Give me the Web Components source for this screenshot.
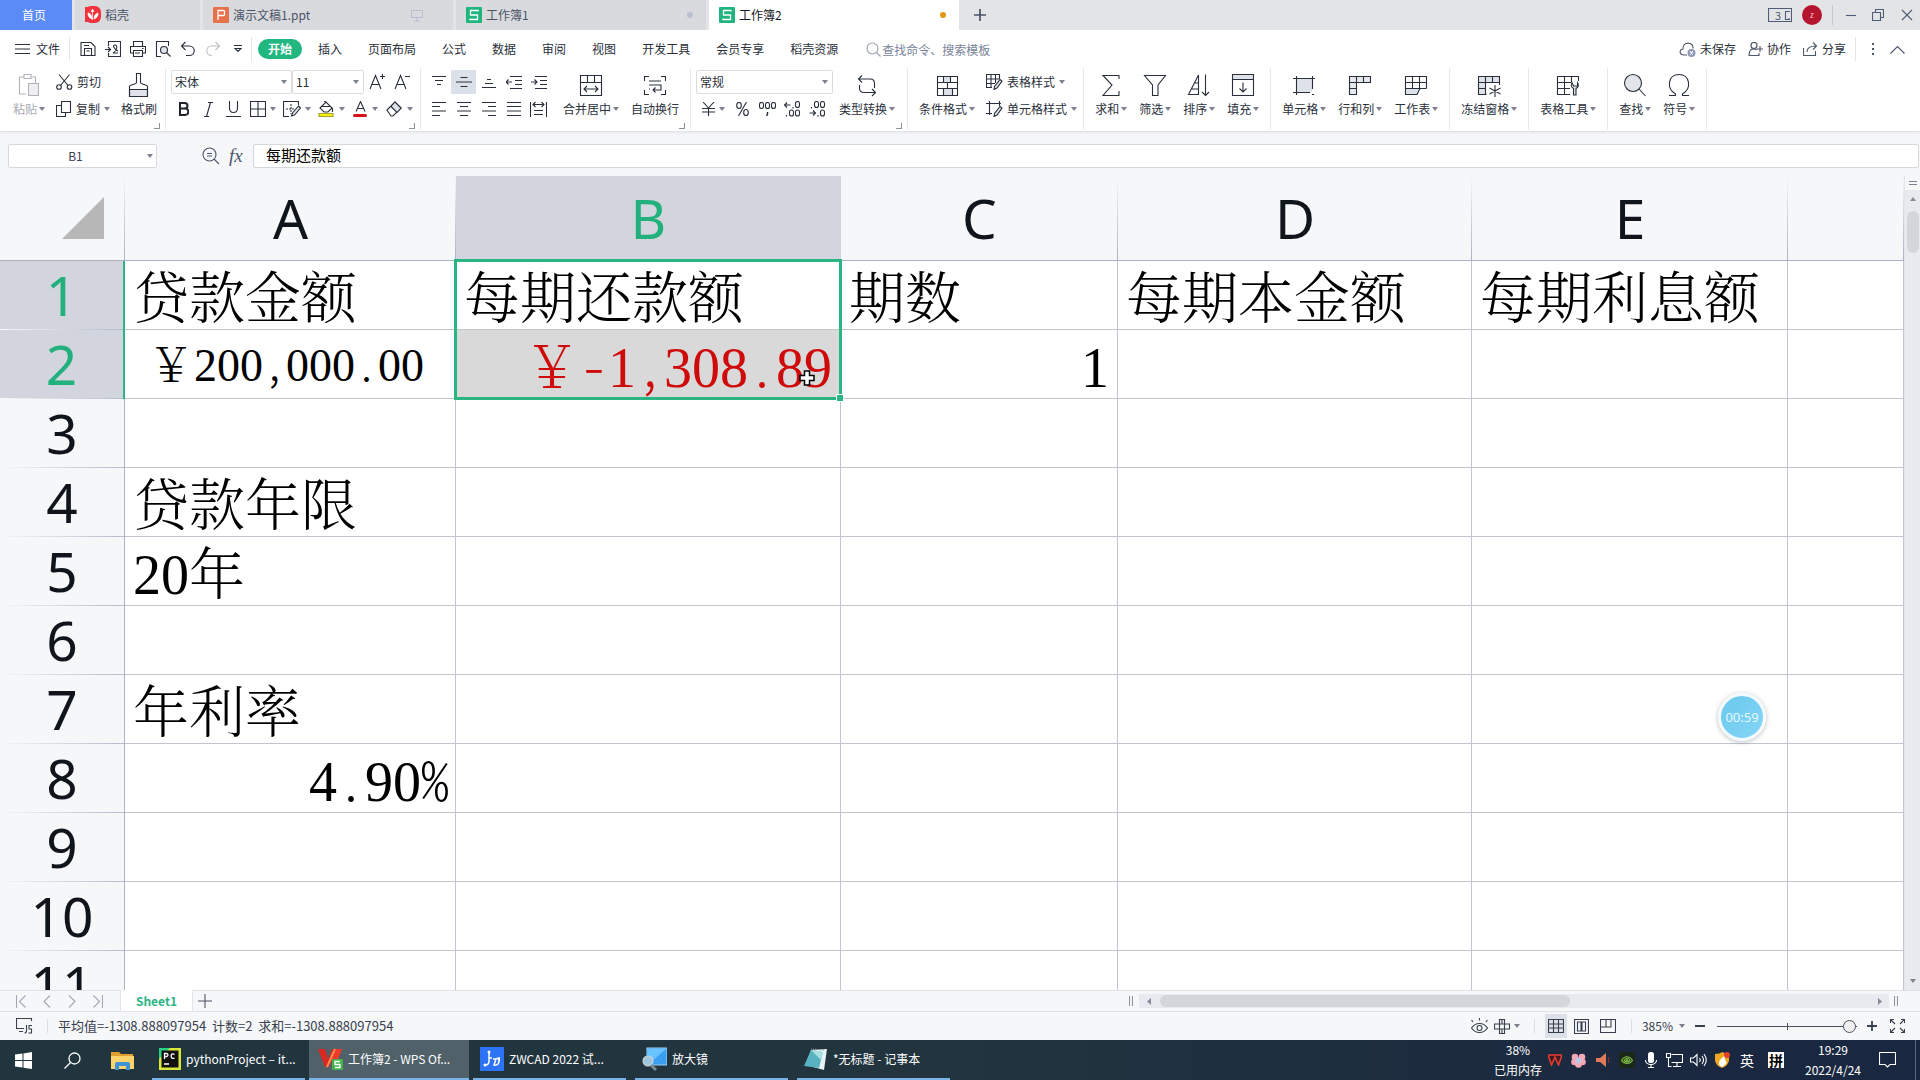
<!DOCTYPE html>
<html lang="zh-CN">
<head>
<meta charset="utf-8">
<title>工作簿2 - WPS Office</title>
<style>
  html, body { margin: 0; height: 100%; }
  body { font: 12px/16px "Noto Sans CJK SC", "Liberation Sans", sans-serif; color: #2a303b; overflow: hidden; }
</style>
</head>
<body>
<desktop-app></desktop-app>
<script>
/* Icon artwork: [width, height, svg content] */
const ICONS = {
  caret: [6, 4, '<path d="M0 0h6L3 4z" fill="#7b818d" stroke="none"/>'],
  corner: [6, 6, '<path d="M5.500 0v5.500H0" stroke="#8c919b"/>'],
  docer: [16, 18, '<rect width="16" height="17" rx="6" fill="#f2333f" stroke="none"/><path d="M0 1h9v15H0z" fill="#f2333f" stroke="none"/><path d="M7.500 14V4M7 13C4 12 3 10 3 7c2 0 4 2 4 6M9 13c3-1 4-3 4-6-3 1-4 3-4 6M6 6l1.500-3L9 6" stroke="#fff" fill="#fff" stroke-width=".7"/>'],
  ppt: [16, 16, '<rect width="16" height="16" rx="1" fill="#e8704a" stroke="none"/><path d="M5 13V3.500h5.500q1 0 1 1v3q0 1-1 1H5" stroke="#fff" stroke-width="1.300"/>'],
  xls: [16, 16, '<rect width="16" height="16" rx="1" fill="#1fb57c" stroke="none"/><path d="M12 4.500V3.500H4.500V8h7v4.500H4v-1" stroke="#fff" stroke-width="1.300"/>'],
  monitor: [12, 13, '<path d="M.5 1.500h11v7H.5zM6 8.500V12M3 12h6" stroke="#b9bfd0"/>'],
  plus: [12, 12, '<path d="M6 0v12M0 6h12" stroke="#4b5468" stroke-width="1.700"/>'],
  rooms: [24, 14, '<path d="M.5.5h23v13H.5z" stroke="#4f5b78"/><path d="M22 3.500h-4.500v8H22M20.500 10.500h1" stroke="#4f5b78"/>'],
  min: [12, 12, '<path d="M1 6.500h10" stroke="#4f5b78"/>'],
  restore: [12, 12, '<path d="M.5 3.500h8v8h-8zM3.500 3.500V.5h8v8h-3" stroke="#4f5b78"/>'],
  close: [12, 12, '<path d="M1 1l10 10M11 1L1 11" stroke="#4f5b78"/>'],
  menu: [15, 12, '<path d="M0 1.500h15M0 6h15M0 10.500h15"/>'],
  save: [16, 16, '<path d="M1 14.500V1.500h10l4 4v9zM4.500 14V7.500h7V14M4 4.500h5M6.500 10h3"/>'],
  pdf: [16, 16, '<path d="M3.500 5V.5h12v15h-12V12M0 8.500h5M3 6l2.500 2.500L3 11M8 12c4-2 5-8 2-8s-1 4 3 6M8 12h5"/>'],
  print: [16, 16, '<path d="M3.500 5V.5h9V5M3.500 12h-3V5.500h15V12h-3M3.500 9.500h9v6h-9zM5 12h5M12 7.500h1.500"/>'],
  preview: [16, 16, '<path d="M6 15.500H1.500V.5h12V5"/><circle cx="9" cy="9" r="3.500" fill="#dfe2e8"/><path d="M11.500 11.500l4 4"/>'],
  undo: [16, 16, '<path d="M5.500 1L1.500 5l4 4M1.500 5H9c7 0 7 9.500 0 9.500H6"/>'],
  redo: [16, 16, '<path d="M10.500 1l4 4-4 4M14.500 5H7c-7 0-7 9.500 0 9.500" stroke="#bcbfc5"/>'],
  more: [10, 8, '<path d="M1 .5h8M2 3.500h6L5 6.500z"/>'],
  find: [15, 15, '<circle cx="6.500" cy="6.500" r="5.500" stroke="#9aa1b2"/><path d="M10.500 10.500L14.500 14.500" stroke="#9aa1b2"/>'],
  cloud: [17, 15, '<path d="M8 13H5C0 13 0 7 4 7 3-1 15-.5 14 6.500" stroke="#4d5569"/><circle cx="12.500" cy="11" r="4" fill="#8d97b5" stroke="none"/><path d="M11 9.500l3 3M14 9.500l-3 3" stroke="#fff"/>'],
  team: [15, 14, '<circle cx="6" cy="3.500" r="3" stroke="#4d5569"/><path d="M9 7.500c-6-2-8 1-8 6h10V11M9 7h6M12 4v6" stroke="#4d5569"/>'],
  share: [15, 14, '<path d="M.5 6v7.500h12V9M4 10c0-4 3-6 9-6M10 .5L13.500 4 10 7.500" stroke="#4d5569"/>'],
  dots: [3, 13, '<path d="M0 0h2v2H0zM0 5h2v2H0zM0 10h2v2H0z" fill="#4d5569" stroke="none"/>'],
  up: [15, 9, '<path d="M.5 8.500l7-7 7 7" stroke="#4d5569"/>'],
  paste: [24, 24, '<path d="M7 4H2.500v17H9M14 4h4.500v6M7 1.500h7v4H7z" stroke="#b0b3b9"/><path d="M11.500 10.500h10v12h-10z" fill="#efeff1" stroke="#b0b3b9"/>'],
  cut: [17, 16, '<path d="M3 .5l9 11M13.500.5l-9 11"/><circle cx="3" cy="13" r="2.300"/><circle cx="13.500" cy="13" r="2.300"/>'],
  copy: [16, 16, '<path d="M5.500.5h9v11h-9zM5 4.500H.5v11h9v-4"/>'],
  brush: [24, 24, '<path d="M2.500 16.500h18v7h-18z" fill="#dfe2e8"/><path d="M9.500.5h4v9c0 2 7 2 7 4v10h-18v-10c0-2 7-2 7-4z"/>'],
  bigger: [16, 16, '<path d="M1 15L6.500 1.500 12 15M3 10.500h7M13.500 0v5M11 2.500h5"/>'],
  smaller: [16, 16, '<path d="M1 15L6.500 1.500 12 15M3 10.500h7M11 2.500h5"/>'],
  bold: [11, 14, '<path d="M2 1h4.500c4 0 4 5.500 0 5.500H2zM2 6.500h5c4.500 0 4.500 6.500 0 6.500H2z" stroke="#1e232d" stroke-width="2"/>'],
  italic: [9, 15, '<path d="M4 .5h5M0 14.500h5M6.500.5l-4 14"/>'],
  underline: [15, 16, '<path d="M3.500 0v7c0 6 8 6 8 0V0M0 15.500h15"/>'],
  border: [16, 16, '<path d="M.5.5h15v15H.5zM8 .5v15M.5 8h15"/>'],
  draw: [18, 16, '<path d="M6 15.500H.5V.5h15V4"/><path d="M8 3v10M3 8h8" stroke-dasharray="2 1"/><path d="M15.500 5l2 2-6 7-3 1 1-3z" fill="#dfe2e8"/>'],
  bucket: [17, 16, '<path d="M2 7l6-6 6 6-4 4H6zM4 5.500h8M8 1L6 0M14.500 7v4"/><path d="M1 12.500h14v3H1z" fill="#f5ef16" stroke="#a5a32e"/>'],
  color: [15, 16, '<path d="M3 10.500L7.500.5 12 10.500M4.500 7.500h6"/><rect y="13" width="14" height="3" rx="1.500" fill="#d90f16" stroke="none"/>'],
  eraser: [17, 16, '<path d="M1 9l8-8 6 6-8 8H5z"/><path d="M5 5.500l6 6 4-4.500-6-6z" fill="#dfe2e8"/>'],
  top: [14, 14, '<path d="M0 1.500h14M3 5.500h8M5 9.500h4"/>'],
  middle: [16, 14, '<path d="M4.500 2.500h7M0 7h16M4.500 11.500h7"/>'],
  bottom: [14, 14, '<path d="M5 4.500h4M3 8.500h8M0 12.500h14"/>'],
  outdent: [16, 14, '<path d="M4 1.500h12M9 5.500h7M9 9.500h7M4 13.500h12M0 7h6M2.500 4.500L0 7l2.500 2.500"/>'],
  indent: [16, 14, '<path d="M4 1.500h12M9 5.500h7M9 9.500h7M4 13.500h12M0 7h6M3.500 4.500L6 7 3.500 9.500"/>'],
  left: [14, 14, '<path d="M0 .5h14M0 4.500h8M0 9h14M0 13.500h8"/>'],
  center: [14, 14, '<path d="M0 .5h14M3 4.500h8M0 9h14M3 13.500h8"/>'],
  right: [14, 14, '<path d="M0 .5h14M6 4.500h8M0 9h14M6 13.500h8"/>'],
  justify: [14, 14, '<path d="M0 .5h14M0 4.500h14M0 9h14M0 13.500h14"/>'],
  spread: [17, 16, '<path d="M.5 1v15M16.500 1v15M3 3.500h11M5.500 1L3 3.500 5.500 6M11.500 1L14 3.500 11.500 6M4 9.500h9M4 13.500h9"/>'],
  merge: [24, 24, '<path d="M1.500 2.500h21v20h-21zM1.500 9.500h21M8.500 2.500v7M15.500 2.500v7M5 16h14M8 13l-3 3 3 3M16 13l3 3-3 3"/>'],
  wrap: [24, 24, '<path d="M6 3.500H1.500V8M18 3.500h4.500V8M6 21.500H1.500V17M18 21.500h4.500V17M6 8h12M6 12h12v5H10M12.500 14.500L10 17l2.500 2.500M6 16h1"/>'],
  yen: [13, 14, '<path d="M1 0l5.500 6L12 0M6.500 6v8M0 6.500h13M0 10h13"/>'],
  percent: [13, 14, '<ellipse cx="3" cy="3.500" rx="2.300" ry="3"/><ellipse cx="10" cy="10.500" rx="2.300" ry="3"/><path d="M10.500 0l-8 14"/>'],
  thousands: [17, 14, '<rect x=".5" y=".5" width="4" height="6" rx="2"/><rect x="6.500" y=".5" width="4" height="6" rx="2"/><rect x="12.500" y=".5" width="4" height="6" rx="2"/><path d="M8.500 10v2l-1 2" stroke-width="1.500"/>'],
  decinc: [17, 16, '<path d="M.5 4h6M3 1.500L.5 4 3 6.500M9 6v1.500M2.500 14v1.500"/><rect x="11.500" y=".5" width="4" height="6" rx="2"/><rect x="5.500" y="9" width="4" height="6" rx="2"/><rect x="11.500" y="9" width="4" height="6" rx="2"/>'],
  decdec: [17, 16, '<path d="M.5 12h6M4 9.500L6.500 12 4 14.500M2.500 6v1.500M9 14v1.500"/><rect x="5.500" y=".5" width="4" height="6" rx="2"/><rect x="11.500" y=".5" width="4" height="6" rx="2"/><rect x="11.500" y="9" width="4" height="6" rx="2"/>'],
  convert: [24, 24, '<path d="M7 2.500L3.500 6 7 9.500M3.500 6H15q4.500 0 4.500 4.500V15M17 16l3.500 3.500L17 23M20 19.500H9q-4.500 0-4.500-4.500v-3"/>'],
  condition: [24, 24, '<path d="M8 4h7v6H8zM8 16h10v6H8z" fill="#dfe2e8" stroke="none"/><path d="M2.500 3.500h20v19h-20zM2.500 9.500h20M2.500 15.500h20M8.500 3.500v6M15.500 3.500v6M12.500 9.500v6M8.500 15.500v7M17.500 15.500v7"/>'],
  tstyle: [17, 16, '<path d="M6 13.500H.5V.5h13V5M.5 5h13M.5 9.500H9M5 .5v13M9.500.5V9"/><path d="M14 5.500l2 1.500-5 7-3 1.500.5-3z" fill="#dfe2e8"/>'],
  cstyle: [17, 16, '<path d="M3.500 0v14M0 2.500h15M13.500 0v5M0 12.500h6"/><path d="M14 5.500l2 1.500-5 7-3 1.500.5-3z" fill="#dfe2e8"/>'],
  sum: [24, 24, '<path d="M20 6V2.500H4L13 12 4 22.500h16V18"/>'],
  filter: [24, 24, '<path d="M1.500 2.500h21L15 12v10.500H9.500V12z"/>'],
  sort: [24, 24, '<path d="M1.500 21.500L11.500 2v19.500zM5 16h6.500M8 10h3.500M18.500 1.500v21M15 19l3.500 3.500L22 19"/>'],
  fill: [24, 24, '<path d="M2 2h20v4H2z" fill="#dfe2e8" stroke="none"/><path d="M1.500 1.500h21v21h-21zM1.500 6.500h21M12 9.500V19M8.500 15.500L12 19l3.500-3.500"/>'],
  cell: [24, 24, '<path d="M5 6h15v13H5z" fill="#dfe2e8" stroke="none"/><path d="M4.500 3v19M20.500 3v13M1 5.500h22M1 19.500h17M20 21.500h2"/>'],
  rowcol: [24, 24, '<path d="M2 4h20v5H2zM2 9h7v12H2z" fill="#e8e9ee" stroke="none"/><path d="M1.500 3.500h21v6h-21zM8.500 3.500v18h-7v-18M15.500 3.500v6M1.500 15.500h7"/>'],
  sheet: [24, 24, '<path d="M2 15h14l-2 6H2z" fill="#dfe2e8" stroke="none"/><path d="M22.500 15.500v-12h-21v18H13l3-6h6.500M1.500 9.500h21M1.500 15.500H16M8.500 3.500v12M15.500 3.500v12"/>'],
  freeze: [24, 24, '<path d="M2 4h20v5H9v12H2z" fill="#dfe2e8" stroke="none"/><path d="M22.500 12V3.500h-21v18h8M1.500 9.500h21M8.500 3.500v18M15.500 3.500v6M1.500 15.500h7M18 12v12M12.500 15l11 6M23.500 15l-11 6"/>'],
  tools: [24, 24, '<path d="M22.500 8V3.500h-21v18H14M1.500 9.500H15M1.500 15.500H14M8.500 3.500v18M15.500 3.500V9"/><path d="M16 9.500c-2 4 0 5 1.500 6v6.500h2.500v-6.500c2-1 3.500-3 1.500-6V13h-4z" fill="#dfe2e8"/>'],
  search: [24, 24, '<circle cx="10" cy="10" r="8.500" fill="#e3e5ea"/><path d="M16 16l6.500 7"/>'],
  omega: [24, 24, '<path d="M2 22.500h6.500V21C-1 15.500 1 1.500 12 1.500S25 15.500 15.500 21v1.500H22"/>'],
  zoomout: [18, 18, '<circle cx="7.500" cy="7.500" r="6.500"/><path d="M12 12l5 5M5 6.500h5M5 9h5" stroke="#4d5569"/>'],
  first: [10, 13, '<path d="M.5 0v13M9.500.5l-6 6 6 6" stroke="#a2a8b3"/>'],
  prev: [8, 13, '<path d="M7 .5l-6 6 6 6" stroke="#a2a8b3"/>'],
  next: [8, 13, '<path d="M1 .5l6 6-6 6" stroke="#a2a8b3"/>'],
  last: [10, 13, '<path d="M9.500 0v13M.5.5l6 6-6 6" stroke="#a2a8b3"/>'],
  add: [14, 14, '<path d="M7 0v14M0 7h14" stroke="#4d5569"/>'],
  arrowl: [4, 7, '<path d="M4 0v7L0 3.500z" fill="#858b98" stroke="none"/>'],
  arrowr: [4, 7, '<path d="M0 0v7l4-3.500z" fill="#858b98" stroke="none"/>'],
  arrowu: [6, 4, '<path d="M0 4h6L3 0z" fill="#858b98" stroke="none"/>'],
  split: [4, 10, '<path d="M.5 0v10M3.500 0v10" stroke="#8f949f"/>'],
  hsplit: [8, 4, '<path d="M0 .5h8M0 3.500h8" stroke="#7c828e"/>'],
  macro: [17, 16, '<path d="M8 10.500H.5v-10h15V3M3 13.500h4M10.500 7v6q0 2-2 2M16 7.500h-3v3.500h2.500v4h-3"/>'],
  eye: [17, 16, '<path d="M.5 10c4-6 12-6 16 0-4 6-12 6-16 0zM2 4l-1.500-2M8.500 2.500V0M15 4l1.500-2"/><circle cx="8.500" cy="10" r="2.500"/>'],
  cross: [16, 15, '<path d="M5.500 .5h5v14h-5zM.5 5h15v5H.5zM8 .5v4.500M8 10v4.500"/>'],
  normal: [16, 14, '<path d="M.5.5h15v13H.5zM.5 5h15M.5 9h15M5.500.5v13M10.500.5v13"/>'],
  pages: [15, 15, '<path d="M.5.5h14v14H.5zM3.500 3h3.500v9H3.500zM8 3h3.500v9H8z"/>'],
  breaks: [16, 14, '<path d="M.5.5h15v13H.5zM6 .5V8M.5 8H11V.5"/>'],
  minus: [10, 2, '<path d="M0 1h10" stroke-width="2"/>'],
  plusb: [10, 10, '<path d="M0 5h10M5 0v10" stroke-width="1.800"/>'],
  full: [15, 14, '<path d="M.5 4V.5H4M1 1l4 4M14.500 4V.5H11M14 1l-4 4M.5 10v3.500H4M1 13l4-4M14.500 10v3.500H11M14 13l-4-4"/>'],
  pointer: [16, 16, '<path d="M5.500 1h5v4.500H15v5h-4.500V15h-5v-4.500H1v-5h4.500z" fill="#fff" stroke="#000" stroke-width="1.500"/>'],
  win: [17, 17, '<path d="M0 2.500L7.500 1.500V8H0zM8.500 1.400L17 0v8H8.500zM0 9h7.500v6.500L0 14.500zM8.500 9H17v8l-8.500-1.300z" fill="#fff" stroke="none"/>'],
  tsearch: [17, 17, '<circle cx="10.500" cy="6.500" r="5.500" stroke="#fff" stroke-width="1.300"/><path d="M6.500 10.500L.5 16.500" stroke="#fff" stroke-width="1.300"/>'],
  folder: [23, 19, '<path d="M0 1h8l2 2h12v14H0z" fill="#e0a030" stroke="none"/><path d="M0 5h23v13H0z" fill="#fbd46c" stroke="none"/><path d="M4 19v-6q0-2 2-2h11q2 0 2 2v6h-4v-4H8v4z" fill="#3f93d8" stroke="none"/>'],
  pycharm: [22, 22, '<rect width="22" height="22" fill="#d9e83a" stroke="none"/><path d="M0 0h11L0 11z" fill="#25d183" stroke="none"/><path d="M2.500 2.500h17v17h-17z" fill="#111" stroke="none"/><path d="M5.500 11V5.500H8q2 1.500 0 3H5.500M15.500 6.500c-4.500-3-4.500 6 0 3.500M5 16h5" stroke="#fff" stroke-width="1.300"/>'],
  wps: [25, 22, '<path d="M0 1h7l3 10 4-10h5l-8 18H7z" fill="#d9281f" stroke="none"/><path d="M13 8l4-7h7l-6 15z" fill="#ee3b27" stroke="none"/><path d="M9 19l8-18" stroke="#ff8a50" stroke-width="2"/><rect x="14" y="11" width="11" height="11" rx="1" fill="#45b34d" stroke="none"/><path d="M22 13.500h-5v3h5v3h-5" stroke="#fff" stroke-width="1.300"/>'],
  zwcad: [24, 24, '<rect width="24" height="24" fill="#2c74f5" stroke="none"/><path d="M9 5v9q0 4-4 4M9 11h3M13 12h3l-2 6q5 1 5-5" stroke="#fff" stroke-width="1.500"/><circle cx="9" cy="5" r="1.500" fill="#fff" stroke="none"/><circle cx="5" cy="18" r="1.500" fill="#fff" stroke="none"/><path d="M16 11l4-1v5z" fill="#fff" stroke="none"/>'],
  magnifier: [25, 24, '<path d="M5 1h20v17H5z" fill="#3a9ff0" stroke="#9ad0f8"/><path d="M6 2h18L8 16H6z" fill="#67c4ff" stroke="none"/><circle cx="6" cy="14" r="5" fill="#9fc6dd" stroke="#ccd6dc"/><path d="M9 18l5 5" stroke="#7a8891" stroke-width="3"/>'],
  notepad: [24, 23, '<path d="M7 2l16-1-3 21-18-5z" fill="#e8f4f4" stroke="none"/><path d="M7 2l12 2-4 16L0 18z" fill="#57b3c0" stroke="none"/><path d="M7 2l12 2-2 8z" fill="#a9dfe3" stroke="none"/><path d="M7 1l14 1" stroke="#8d9696" stroke-dasharray="1 1"/>'],
  tw: [14, 12, '<path d="M0 1h14l-3.500 10L7 3 3.500 11z" fill="#3c1a20" stroke="#e53b32" stroke-width="1.600"/>'],
  flower: [15, 15, '<g fill="#f5a9b4" stroke="none"><circle cx="4" cy="4" r="3.300"/><circle cx="11" cy="4" r="3.300"/><circle cx="3.500" cy="9" r="3.300"/><circle cx="11.500" cy="9" r="3.300"/><circle cx="7.500" cy="11.500" r="3.300"/></g><circle cx="7.500" cy="7.500" r="3" fill="#b9c7e8" stroke="none"/>'],
  horn: [14, 14, '<path d="M0 5h4l6-5v14l-6-5H0z" fill="#e07a58" stroke="none"/><path d="M12.500 4v6" stroke="#8c2a22"/>'],
  nvidia: [16, 16, '<rect width="16" height="16" fill="#1b2718" stroke="none"/><path d="M2.500 8.500c3-5 8-5 11 0-3 4-8 4-11 0zM5 8.500c2-3 5-3 6 0-2 2-4 2-6 0z" stroke="#7ebd46"/><circle cx="8" cy="8.500" r="1.300" fill="#7ebd46" stroke="none"/>'],
  mic: [12, 16, '<rect x="3" width="6" height="11" rx="2.500" fill="#fff" stroke="none"/><path d="M.5 8c0 6 11 6 11 0M6 12.500V15M3 15.500h6" stroke="#fff"/>'],
  net: [17, 14, '<path d="M5.500 1.500h11v8h-11M11 9.500v4M7 13.500h8M.5.5h4v4h-4zM2.500 4.500v9h3" stroke="#fff"/>'],
  volume: [17, 14, '<path d="M.5 5h3L7 1.500v11L3.500 9h-3zM9.500 5q1.500 2 0 4M12 3q3 4 0 8M14 1q4.500 6 0 12" stroke="#fff"/>'],
  shield: [15, 16, '<path d="M0 2q5 0 7.500-2Q10 2 14 2v6q0 5-7 8Q0 13 0 8z" fill="#f3a71f" stroke="none"/><path d="M5 14q-3-4 2-8l3-3q-1 4 1 6t-4 6z" fill="#fff" stroke="none"/><circle cx="12" cy="3" r="3" fill="#e5402a" stroke="none"/>'],
  notice: [17, 16, '<path d="M.5.5h16v12H11L8.500 15 6 12.500H.5z" stroke="#fff"/>']
};

/* Registers an element whose shadow root is cloned from a template. */
function element(name, css, html, setup) {
  const t = document.createElement('template');
  t.innerHTML = '<style>:host{box-sizing:border-box}*{box-sizing:border-box}button,input,select{font:inherit;color:inherit;border:0;margin:0;padding:0;background:none;outline:0;border-radius:0}' + css + '</style>' + html;
  customElements.define(name, class extends HTMLElement {
    connectedCallback() {
      if (this.shadowRoot) return;
      this.attachShadow({ mode: 'open' }).append(t.content.cloneNode(true));
      if (setup) setup(this, this.shadowRoot);
    }
  });
}
const icon = n => `<ui-icon name="${n}"></ui-icon>`;

element('ui-icon', ':host{display:block;flex:none;line-height:0}svg{display:block;fill:none;stroke:currentColor;stroke-width:1.1}', '', (el, root) => {
  const [w, h, body] = ICONS[el.getAttribute('name')];
  root.innerHTML += `<svg width="${w}" height="${h}" viewBox="0 0 ${w} ${h}" aria-hidden="true">${body}</svg>`;
});

/* ---- title bar ---- */
element('doc-tab', `:host{display:block;width:250px;margin-right:3px;background:#d8dade;color:#4c5466}
  :host([active]){background:#fff;color:#14181f}
  button{display:flex;align-items:center;gap:4px;width:100%;height:100%;padding:0 8px 0 10px;text-align:left}
  span{flex:1}.end{margin-right:22px}.dot{width:6px;height:6px;border-radius:3px;background:#bac0d0;margin:0 5px}:host([active]) .dot{background:#e3960f}`,
  '<button type="button"><span><slot></slot></span></button>', (el, root) => {
    const b = root.querySelector('button'), e = el.getAttribute('end');
    b.insertAdjacentHTML('afterbegin', icon(el.getAttribute('kind')));
    if (e === 'dot') b.insertAdjacentHTML('beforeend', '<i class="dot"></i>');
    if (e === 'monitor') b.insertAdjacentHTML('beforeend', '<ui-icon class="end" name="monitor"></ui-icon>');
  });
element('title-bar', `:host{display:flex;height:30px;flex:none;background:#e3e4e6}
  .home{width:72px;margin-right:3px;background:#5b8bf6;color:#fff;padding-right:4px}.short{width:125px}
  .new{width:36px;display:grid;place-items:center}.sp{flex:1}
  .win{display:flex;align-items:center;padding-right:7px}.win button{display:grid;place-items:center}
  .rooms{width:24px}.rooms span{grid-area:1/1;font-size:11px;line-height:14px;color:#4f5b78;padding-right:4px}.rooms ui-icon{grid-area:1/1}
  .me{width:20px;height:20px;border-radius:10px;background:#b5142e;color:#f0c0c6;font-size:8px;line-height:20px;margin:0 10px}
  hr{width:1px;height:20px;border:0;background:#c5c8ce;margin:0 12px 0 0}.b{width:12px;margin-right:15px}.b:last-child{margin-right:0}.b.w{margin-right:17px}`,
  `<button class="home" type="button">首页</button>
   <doc-tab class="short" kind="docer">稻壳</doc-tab>
   <doc-tab kind="ppt" end="monitor">演示文稿1.ppt</doc-tab>
   <doc-tab kind="xls" end="dot">工作簿1</doc-tab>
   <doc-tab kind="xls" end="dot" active>工作簿2</doc-tab>
   <button class="new" type="button" aria-label="新建">${icon('plus')}</button><div class="sp"></div>
   <div class="win"><button class="rooms" type="button"><span>3</span>${icon('rooms')}</button><button class="me" type="button">z</button><hr>
   <button class="b" type="button" aria-label="最小化">${icon('min')}</button><button class="b w" type="button" aria-label="还原">${icon('restore')}</button><button class="b" type="button" aria-label="关闭">${icon('close')}</button></div>`);

/* ---- menu bar ---- */
element('menu-bar', `:host{display:flex;height:38px;flex:none;align-items:center;background:#fff;padding:0 15px}
  button{display:flex;align-items:center;white-space:nowrap}
  .file{gap:6px;margin-right:9px}hr{width:1px;height:24px;border:0;margin:0;background:#e3e4e8}
  .q{width:25px;justify-content:center}.qs{display:flex;padding:0 1px 0 5px}
  .tabs{display:flex;align-items:center}.tabs button{padding:0 13px;height:20px}
  .tabs .on{background:#22b780;color:#fff;font-weight:700;border-radius:10px;padding:0 10px;margin:0 3px 0 6px}
  .find{display:flex;align-items:center;gap:1px;margin-left:15px;color:#8089a0}.find input{width:160px;height:20px}.find input::placeholder{color:#79829a;opacity:1}
  .sp{flex:1}.r{gap:4px;margin-right:12px}.r.end{margin-right:9px}.dots{margin:0 15px 0 16px}`,
  `<button class="file" type="button">${icon('menu')}文件</button><hr>
   <div class="qs">${['save','pdf','print','preview','undo','redo','more'].map(n => `<button class="q" type="button">${icon(n)}</button>`).join('')}</div><hr>
   <nav class="tabs"><button class="on" type="button">开始</button>${['插入','页面布局','公式','数据','审阅','视图','开发工具','会员专享','稻壳资源'].map(n => `<button type="button">${n}</button>`).join('')}</nav>
   <label class="find">${icon('find')}<input aria-label="搜索" placeholder="查找命令、搜索模板"></label><div class="sp"></div>
   <button class="r" type="button">${icon('cloud')}未保存</button><button class="r" type="button">${icon('team')}协作</button><button class="r end" type="button">${icon('share')}分享</button><hr>
   <button class="dots" type="button" aria-label="更多">${icon('dots')}</button><button type="button" aria-label="收起">${icon('up')}</button>`);

/* ---- ribbon ---- */
element('ribbon-group', `:host{display:flex;position:relative;padding:2px 5px 0;border-right:1px solid #e6e8eb;height:62px;flex:none}
  .c{display:none;position:absolute;right:5px;bottom:1px}:host([corner]) .c{display:block}`, `<slot></slot><ui-icon class="c" name="corner"></ui-icon>`);
element('big-button', `:host{display:block}button{display:flex;flex-direction:column;align-items:center;gap:4px;padding:3px 6px 0}
  span{display:flex;align-items:center;gap:2px;height:16px;white-space:nowrap}:host([plain]) .k{display:none}:host([dim]) button{color:#a7abb2}`,
  `<button type="button"><slot name="icon"></slot><span><slot></slot><ui-icon class="k" name="caret"></ui-icon></span></button>`);
element('small-button', `:host{display:block;width:25px;height:24px}button{display:flex;align-items:center;justify-content:center;gap:4px;width:100%;height:100%;white-space:nowrap}
  :host([on]) button{background:#dce0e8}:host([caret]){width:34px}:host([text]){width:auto}:host([text]) button{justify-content:flex-start}.k{display:none}:host([caret]) .k{display:block}`,
  `<button type="button"><slot name="icon"></slot><slot></slot><ui-icon class="k" name="caret"></ui-icon></button>`);
element('combo-box', `:host{display:grid;height:24px;align-items:center;border:1px solid #dadce0;border-radius:2px;background:#fff}
  select{grid-area:1/1;appearance:none;width:100%;height:22px;padding-left:3px}ui-icon{grid-area:1/1;justify-self:end;margin-right:4px;pointer-events:none}`,
  `<select></select>${icon('caret')}`, (el, root) => {
    const s = root.querySelector('select');
    s.setAttribute('aria-label', el.getAttribute('label'));
    s.append(new Option(el.getAttribute('value')));
  });
const big = (i, t, a = '') => `<big-button ${a}><ui-icon slot="icon" name="${i}"></ui-icon>${t}</big-button>`;
const small = (i, a = '', t = '') => `<small-button ${a}><ui-icon slot="icon" name="${i}"></ui-icon>${t}</small-button>`;
element('ribbon-bar', `:host{display:flex;height:64px;flex:none;background:#fff;border-bottom:1px solid #e1e3e6;box-shadow:0 1px 3px #0001;position:relative}
  .col{display:flex;flex-direction:column;gap:3px}.row{display:flex}.w1{width:121px}.w2{width:72px}.w3{width:137px}
  .clip{padding:0 5px}.first{padding-left:7px;padding-right:2px}.font{padding-right:4px}.al{margin-right:6px}.mn{padding-right:6px}.sty{margin-left:5px}.d{padding-right:6px}`,
  `<ribbon-group class="first" corner>${big('paste', '粘贴', 'dim')}
     <div class="col clip">${small('cut', 'text', '剪切')}${small('copy', 'text caret', '复制')}</div>${big('brush', '格式刷', 'plain')}</ribbon-group>
   <ribbon-group class="font" corner><div class="col"><div class="row"><combo-box class="w1" label="字体" value="宋体"></combo-box><combo-box class="w2" label="字号" value="11"></combo-box>${small('bigger')}${small('smaller')}</div>
     <div class="row">${small('bold')}${small('italic')}${small('underline')}${['border','draw','bucket','color','eraser'].map(n => small(n, 'caret')).join('')}</div></div></ribbon-group>
   <ribbon-group corner><div class="col al"><div class="row">${small('top')}${small('middle', 'on')}${small('bottom')}${small('outdent')}${small('indent')}</div>
     <div class="row">${['left','center','right','justify','spread'].map(n => small(n)).join('')}</div></div>${big('merge', '合并居中')}${big('wrap', '自动换行', 'plain')}</ribbon-group>
   <ribbon-group class="mn" corner><div class="col"><combo-box class="w3" label="数字格式" value="常规"></combo-box>
     <div class="row">${small('yen', 'caret')}${small('percent')}${small('thousands')}${small('decinc')}${small('decdec')}</div></div>${big('convert', '类型转换')}</ribbon-group>
   <ribbon-group class="d">${big('condition', '条件格式')}<div class="col sty"><div class="row">${small('tstyle', 'text caret', '表格样式')}</div><div class="row">${small('cstyle', 'text caret', '单元格样式')}</div></div></ribbon-group>
   <ribbon-group>${big('sum', '求和')}${big('filter', '筛选')}${big('sort', '排序')}${big('fill', '填充')}</ribbon-group>
   <ribbon-group>${big('cell', '单元格')}${big('rowcol', '行和列')}${big('sheet', '工作表')}</ribbon-group>
   <ribbon-group>${big('freeze', '冻结窗格')}</ribbon-group><ribbon-group>${big('tools', '表格工具')}</ribbon-group>
   <ribbon-group>${big('search', '查找')}${big('omega', '符号')}</ribbon-group>`);

/* ---- formula bar ---- */
element('formula-bar', `:host{display:flex;height:44px;flex:none;align-items:center;padding:4px 1px 0 8px;background:#f5f7f9}
  .box{height:24px;border:1px solid #d6d8dc;border-radius:2px;background:#fff}
  .name{display:grid;width:149px;align-items:center}.name input{grid-area:1/1;width:100%;text-align:center;padding-right:14px;color:#3b4252}
  .name ui-icon{grid-area:1/1;justify-self:end;margin-right:3px}
  button{display:block;color:#4d5569}.z{margin:0 9px 0 45px}.fx{font:italic 19px/20px "Liberation Serif",serif;width:24px;text-align:left}
  .f{flex:1;font-size:15px;line-height:18px;padding:0 0 4px 12px;color:#000;min-width:0}`,
  `<label class="box name"><input aria-label="名称框" value="B1">${icon('caret')}</label>
   <button class="z" type="button" aria-label="浏览">${icon('zoomout')}</button><button class="fx" type="button">fx</button>
   <input class="box f" aria-label="编辑栏" value="每期还款额">`);

/* ---- worksheet ---- */
element('sheet-grid', `:host{display:flex;flex:1;min-height:0;overflow:hidden;background:#fff;position:relative}
  .view{flex:1;overflow:hidden;min-width:0}
  table{border-collapse:separate;border-spacing:0;table-layout:fixed;width:100%}
  th{font:400 55px/66px "Noto Sans","Open Sans",sans-serif;color:#10151c;background:#f5f7f9;padding:0}
  thead th{height:85px;border-bottom:1px solid #aab3c2;background:linear-gradient(#f5f7f9,#aab3c2) right/1px 100% no-repeat #f5f7f9}
  tbody th{height:69px;padding-bottom:2px;border-right:1px solid #aab3c2;background:linear-gradient(90deg,#f5f7f9,#b4bccb) bottom/100% 1px no-repeat #f5f7f9}
  thead th.on{background:#d2d5dd;color:#22b07d;border-bottom-color:#22b07d}
  tbody th.on{background-color:#d2d5dd;color:#22b07d;border-right:2px solid #2bb583}
  .corner svg{display:block;margin:0 0 0 62px;fill:#b7b7b7}
  td{height:69px;border-right:1px solid #c0c5ce;border-bottom:1px solid #c0c5ce;padding:8px 8px 0;font:300 56px/60px "Liberation Serif","Noto Serif CJK SC","Noto Sans CJK SC",serif;color:#000;white-space:nowrap}
  td div{height:60px}
  .n{text-align:right}.pct{padding-right:6px}.n.money div{font-size:46px;line-height:56px}.money{padding-right:31px}
  .sel{background:#d9d9d9;color:#cf0a0a}
  i{font-style:normal;font-family:"Noto Sans CJK SC",sans-serif;font-feature-settings:"hwid";line-height:0}
  .anchor{position:relative}
  .anchor .frame{position:absolute;z-index:1;left:-2px;right:-2px;top:-2px;height:141px;border:3px solid #2bb583;pointer-events:none}
  .handle{position:absolute;right:-5px;bottom:-5px;width:6px;height:6px;background:#2bb583;border:1px solid #fff;box-sizing:content-box}
  .ptr{position:absolute;right:24px;bottom:11px}
  .bar{width:16px;flex:none;display:flex;flex-direction:column;align-items:center;background:#e8eaef;border-left:1px solid #e2e5ea}
  .hs{background:#f5f7f9;align-self:stretch;height:14px;display:grid;place-items:center}
  .up{margin:7px 0 10px}.thumb{width:12px;height:42px;border-radius:6px;background:#d3d6db}.dn{margin-top:auto;margin-bottom:7px}
  .timer{position:absolute;right:154px;bottom:249px;width:48px;height:48px;border-radius:24px;border:3px solid #f3faff;background:linear-gradient(135deg,#69c8ee,#86d6f6);box-shadow:0 1px 5px #0004;display:grid;place-items:center;color:#e6f7ff;font:13px/16px "Noto Sans",sans-serif}`,
  `<div class="view"><table><colgroup><col style="width:125px"><col style="width:331px"><col style="width:385px"><col style="width:277px"><col style="width:354px"><col style="width:316px"><col></colgroup><thead></thead><tbody></tbody></table></div>
   <div class="bar"><div class="hs">${icon('hsplit')}</div><ui-icon class="up" name="arrowu"></ui-icon><div class="thumb"></div><ui-icon class="dn" name="caret"></ui-icon></div>
   <div class="timer">00:59</div>`, (el, root) => {
    const cells = {
      A1: ['', '贷款金额'], B1: ['anchor', '每期还款额'], C1: ['', '期数'], D1: ['', '每期本金额'], E1: ['', '每期利息额'],
      A2: ['n money', '￥200<i>,</i>000<i>.</i>00'], B2: ['n sel', '￥<i>-</i>1<i>,</i>308<i>.</i>89'], C2: ['n', '1'],
      A4: ['', '贷款年限'], A5: ['', '20年'], A7: ['', '年利率'], A8: ['n pct', '4<i>.</i>90<i>%</i>']
    };
    root.querySelector('thead').innerHTML = '<tr><th class="corner"><svg width="42" height="42"><path d="M42 0v42H0z"/></svg></th>' +
      ['A', 'B', 'C', 'D', 'E', ''].map(c => `<th${c === 'B' ? ' class="on"' : ''}>${c}</th>`).join('') + '</tr>';
    let rows = '';
    for (let r = 1; r <= 11; r++) {
      rows += `<tr><th${r < 3 ? ' class="on"' : ''}>${r}</th>` + ['A', 'B', 'C', 'D', 'E', 'F'].map(c => {
        const [k, t] = cells[c + r] || ['', ''];
        const frame = k === 'anchor' ? `<span class="frame"><span class="handle"></span><ui-icon class="ptr" name="pointer"></ui-icon></span>` : '';
        return `<td class="${k}">${t ? `<div>${t}</div>` : ''}${frame}</td>`;
      }).join('') + '</tr>';
    }
    root.querySelector('tbody').innerHTML = rows;
  });

/* ---- sheet tabs and horizontal scroll ---- */
element('sheet-tabs', `:host{display:flex;height:22px;flex:none;align-items:center;background:#f5f7f9;border-top:1px solid #dfe2e6;border-bottom:1px solid #dfe2e6;padding:0 22px 0 16px}
  nav{display:flex;gap:17px;align-items:center;width:104px;height:22px}.s{width:73px;height:22px;background:#fff;border:1px solid #e2e4e8;border-top:0;color:#2bb583;font-weight:700}.add{margin-left:5px}
  .sp{flex:1}.track{display:flex;align-items:center;width:750px;height:14px;background:#e8eaef;margin:0 5px 0 6px;padding:0 7px 0 8px}
  .thumb{width:410px;height:12px;border-radius:6px;background:#d3d6db;margin:0 auto 0 9px}`,
  `<nav><button type="button" aria-label="第一张">${icon('first')}</button><button type="button" aria-label="上一张">${icon('prev')}</button><button type="button" aria-label="下一张">${icon('next')}</button><button type="button" aria-label="最后一张">${icon('last')}</button></nav>
   <button class="s" type="button">Sheet1</button><button class="add" type="button" aria-label="新建工作表">${icon('add')}</button><div class="sp"></div>
   ${icon('split')}<div class="track">${icon('arrowl')}<div class="thumb"></div>${icon('arrowr')}</div>${icon('split')}`);

/* ---- status bar ---- */
element('status-bar', `:host{display:flex;height:28px;flex:none;align-items:center;background:#f5f7f9;padding:0 15px 0 16px;color:#39404d}
  hr{width:1px;height:14px;border:0;background:#dcdfe4;margin:0 10px 0 14px}.sp{flex:1}span{white-space:pre;font-size:13px}
  button{display:flex;align-items:center;gap:4px;justify-content:center;height:24px}
  .v{width:24px;margin-right:6px}.v.on{width:22px;background:#dce0e8}.v2{width:18px}.v.v2{margin-right:8px}
  .eye{margin-right:6px}.pct{gap:6px;margin-right:10px}.full{margin-left:13px}
  .zoom{display:grid;width:140px;height:20px;align-items:center;margin:0 10px 0 12px}.zoom input{grid-area:1/1;appearance:none;width:100%;height:20px;background:linear-gradient(#4a5060,#4a5060) center/100% 1px no-repeat}
  .zoom input::-webkit-slider-thumb{appearance:none;width:13px;height:13px;border-radius:7px;border:1px solid #4a5060;background:#f1f1f3}
  .tick{grid-area:1/1;width:1px;height:7px;background:#4a5060;justify-self:center;pointer-events:none}`,
  `${icon('macro')}<hr><span>平均值=-1308.888097954  计数=2  求和=-1308.888097954</span><div class="sp"></div>
   <button class="eye" type="button" aria-label="护眼模式">${icon('eye')}</button><button type="button" aria-label="阅读模式">${icon('cross')}${icon('caret')}</button><hr>
   <button class="v on" type="button" aria-label="普通视图">${icon('normal')}</button><button class="v v2" type="button" aria-label="页面布局">${icon('pages')}</button><button class="v2" type="button" aria-label="分页预览">${icon('breaks')}</button><hr>
   <button class="pct" type="button">385%${icon('caret')}</button><button type="button" aria-label="缩小">${icon('minus')}</button>
   <label class="zoom"><input type="range" min="0" max="100" value="99" aria-label="缩放"><i class="tick"></i></label><button type="button" aria-label="放大">${icon('plusb')}</button><button class="full" type="button" aria-label="全屏">${icon('full')}</button>`);

/* ---- taskbar ---- */
element('task-item', `:host{display:block;margin-right:4px;border-bottom:2px solid #79b3e8;width:153px;height:40px}:host([on]){background:#50616a;width:160px}:host([wide]){margin-right:9px}
  button{display:flex;align-items:center;gap:5px;width:100%;height:38px;padding:0 0 0 7px;text-align:left;white-space:nowrap}:host([on]) button{padding-left:9px}`,
  `<button type="button"><slot name="icon"></slot><slot></slot></button>`);
element('task-bar', `:host{display:flex;height:40px;flex:none;color:#fff;background:linear-gradient(90deg,#21353e,#22353f 45%,#1e303e 65%,#1a2740 90%);align-items:center}
  button{display:block}.w{margin:0 32px 0 15px}.f{margin:0 18px 0 30px}.sp{flex:1}
  .mem{width:50px;text-align:center;line-height:20px}.two{line-height:20px;text-align:center}.two div{white-space:nowrap}
  .tray{display:flex;align-items:center;margin:0 17px 0 0}.tray>*{width:24px;display:grid;place-items:center}
  .tray .gap{width:5px}.en{font-size:14px}.py{font-size:14px}.py b{display:block;width:16px;height:16px;background:#fff;color:#000;line-height:16px;text-align:center}
  .note{margin:0 19px 0 18px}hr{width:1px;height:40px;border:0;margin:0 4px 0 0;background:#5b6879}`,
  `<button class="w" type="button" aria-label="开始">${icon('win')}</button><button type="button" aria-label="搜索">${icon('tsearch')}</button><button class="f" type="button" aria-label="文件资源管理器">${icon('folder')}</button>
   <task-item><ui-icon slot="icon" name="pycharm"></ui-icon>pythonProject – it...</task-item>
   <task-item on><ui-icon slot="icon" name="wps"></ui-icon>工作簿2 - WPS Of...</task-item>
   <task-item wide><ui-icon slot="icon" name="zwcad"></ui-icon>ZWCAD 2022 试...</task-item>
   <task-item wide><ui-icon slot="icon" name="magnifier"></ui-icon>放大镜</task-item>
   <task-item><ui-icon slot="icon" name="notepad"></ui-icon>*无标题 - 记事本</task-item><div class="sp"></div>
   <div class="mem"><div>38%</div><div>已用内存</div></div>
   <div class="tray">${['tw','flower','horn','nvidia','mic','net','volume','shield'].map(n => `<span>${icon(n)}</span>`).join('')}<span class="en">英</span><span class="gap"></span><span class="py"><b>拼</b></span></div>
   <div class="two"><div>19:29</div><div>2022/4/24</div></div><button class="note" type="button" aria-label="通知">${icon('notice')}</button><hr>`);

element('desktop-app', ':host{display:flex;flex-direction:column;height:100vh;overflow:hidden;background:#f5f7f9}',
  '<title-bar></title-bar><menu-bar></menu-bar><ribbon-bar></ribbon-bar><formula-bar></formula-bar><sheet-grid></sheet-grid><sheet-tabs></sheet-tabs><status-bar></status-bar><task-bar></task-bar>');
</script>
</body>
</html>
